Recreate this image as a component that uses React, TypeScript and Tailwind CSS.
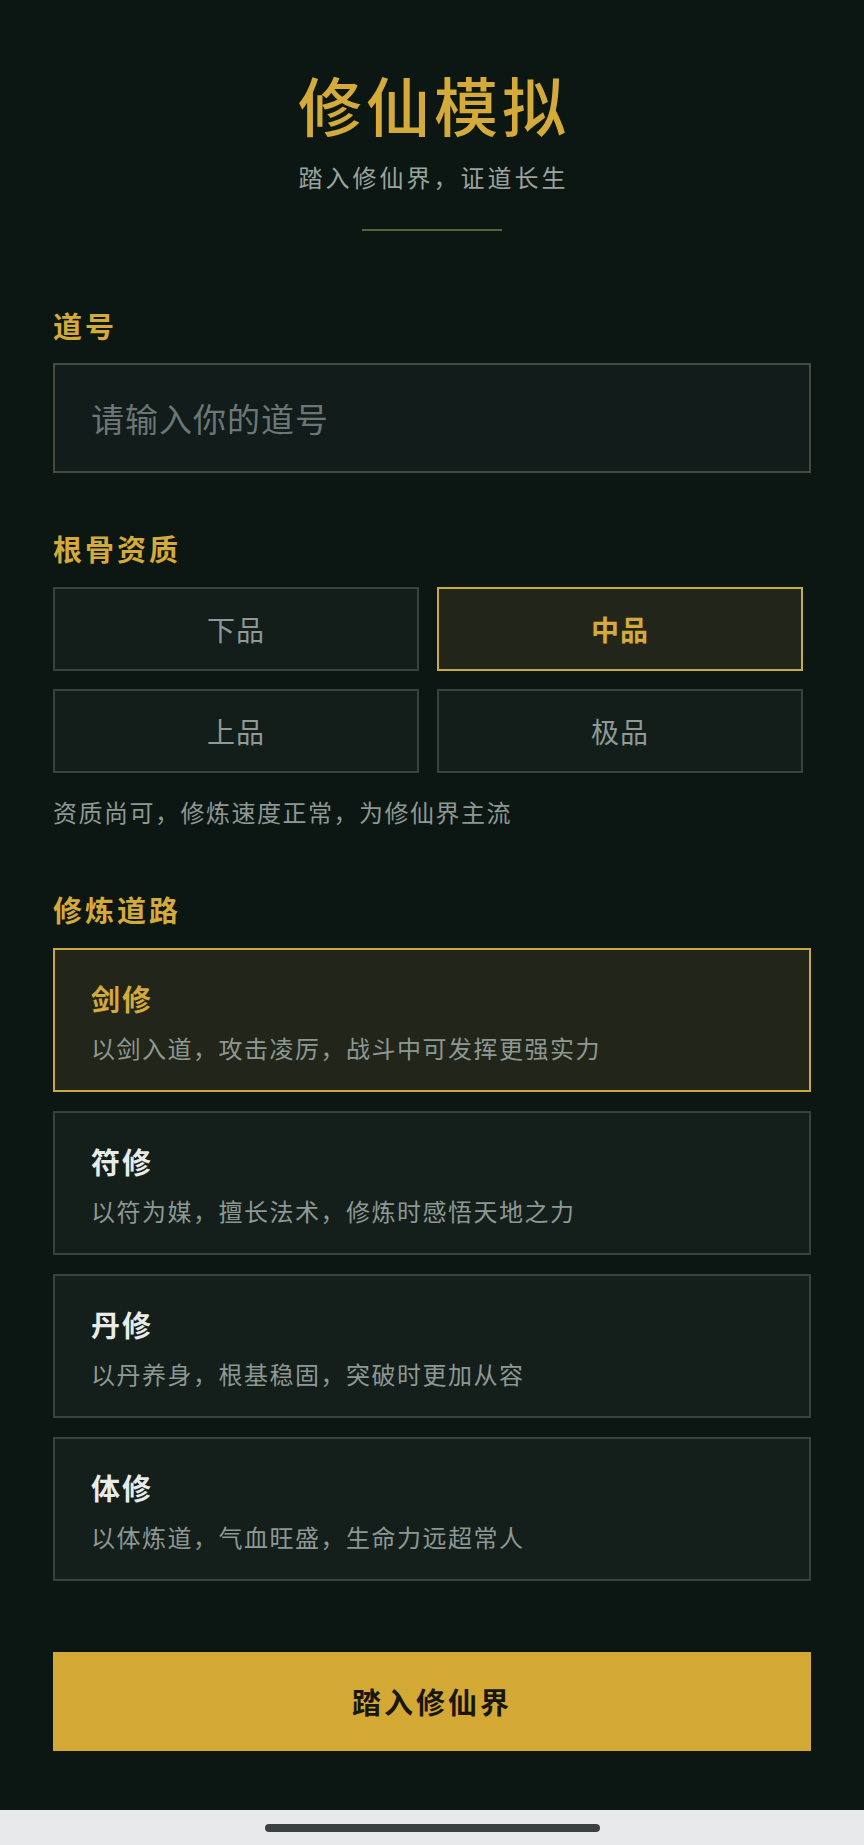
import React, { useState } from "react";

const grades = [
  { name: "下品", desc: "资质平平，修炼速度较慢，需勤勉方可有成" },
  { name: "中品", desc: "资质尚可，修炼速度正常，为修仙界主流" },
  { name: "上品", desc: "资质优异，修炼速度较快，前途无量" },
  { name: "极品", desc: "天纵奇才，修炼一日千里，万中无一" },
];

const paths = [
  { name: "剑修", desc: "以剑入道，攻击凌厉，战斗中可发挥更强实力" },
  { name: "符修", desc: "以符为媒，擅长法术，修炼时感悟天地之力" },
  { name: "丹修", desc: "以丹养身，根基稳固，突破时更加从容" },
  { name: "体修", desc: "以体炼道，气血旺盛，生命力远超常人" },
];

export default function App() {
  const [grade, setGrade] = useState(1);
  const [path, setPath] = useState(0);
  const [name, setName] = useState("");

  return (
    <div
      className="w-[864px] min-h-[1845px] bg-[#0c1613] flex flex-col"
      style={{ fontFamily: '"Noto Sans CJK SC", "Noto Sans", sans-serif' }}
    >
      <div className="flex-1 flex flex-col px-[53px] pt-[63px] pb-[59px]">
        <div className="flex flex-col items-center">
          <h1 className="text-[64px] leading-[80px] font-medium tracking-[4px] text-[#d4aa3a] pl-[4px]">
            修仙模拟
          </h1>
          <p className="mt-[18px] text-[24px] leading-[32px] tracking-[3px] text-[#9aa39e] pl-[3px]">
            踏入修仙界，证道长生
          </p>
          <div className="mt-[36px] h-[2px] w-[140px] bg-[#56633a]" />
        </div>

        <label className="mt-[76px] text-[29px] leading-[36px] font-bold tracking-[3px] text-[#d4aa3a]">
          道号
        </label>
        <input
          value={name}
          onChange={(e) => setName(e.target.value)}
          placeholder="请输入你的道号"
          className="mt-[20px] h-[110px] w-full border-2 border-[#454b3e] bg-[#121c1b] px-[36px] text-[33px] tracking-[1px] text-[#e6ebe8] placeholder:text-[#6c7775] outline-none"
        />

        <div className="mt-[57px] text-[29px] leading-[36px] font-bold tracking-[3px] text-[#d4aa3a]">
          根骨资质
        </div>
        <div className="mt-[21px] grid w-[750px] grid-cols-2 gap-[18px]">
          {grades.map((g, i) => {
            const sel = i === grade;
            return (
              <button
                key={g.name}
                onClick={() => setGrade(i)}
                className={
                  sel
                    ? "h-[84px] border-2 border-[#c9ab43] bg-[#22261a] text-[28px] font-bold tracking-[1px] text-[#d4aa3a]"
                    : "h-[84px] border-2 border-[#39433e] bg-[#131e1b] text-[28px] tracking-[1px] text-[#8f9a96]"
                }
              >
                {g.name}
              </button>
            );
          })}
        </div>
        <p className="mt-[23px] text-[24px] leading-[32px] tracking-[1.5px] text-[#8e9893]">
          {grades[grade].desc}
        </p>

        <div className="mt-[63px] text-[29px] leading-[36px] font-bold tracking-[3px] text-[#d4aa3a]">
          修炼道路
        </div>
        <div className="mt-[21px] flex flex-col gap-[19px]">
          {paths.map((p, i) => {
            const sel = i === path;
            return (
              <button
                key={p.name}
                onClick={() => setPath(i)}
                className={
                  sel
                    ? "flex h-[144px] flex-col items-start border-2 border-[#c7a940] bg-[#22261a] px-[36px] pt-[28px] text-left"
                    : "flex h-[144px] flex-col items-start border-2 border-[#38433d] bg-[#141e1b] px-[36px] pt-[28px] text-left"
                }
              >
                <span
                  className={
                    sel
                      ? "text-[29px] leading-[40px] font-bold tracking-[2px] text-[#d4aa3a]"
                      : "text-[29px] leading-[40px] font-bold tracking-[2px] text-[#e8ece9]"
                  }
                >
                  {p.name}
                </span>
                <span className="mt-[14px] text-[24px] leading-[32px] tracking-[1.5px] text-[#8e9893]">
                  {p.desc}
                </span>
              </button>
            );
          })}
        </div>

        <button className="mt-[71px] h-[99px] w-full bg-[#d4a834] text-[29px] font-bold tracking-[3px] text-[#17170f]">
          踏入修仙界
        </button>
      </div>

      <div className="flex h-[35px] items-center justify-center bg-[#e7e9ea]">
        <div className="h-[8px] w-[335px] rounded-full bg-[#3b4041]" />
      </div>
    </div>
  );
}
